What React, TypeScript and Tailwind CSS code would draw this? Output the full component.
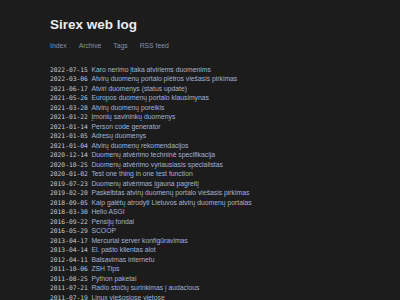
import React from "react";

const posts: [string, string][] = [
  ["2022-07-15", "Karo nerimo įtaka atviriems duomenims"],
  ["2022-03-06", "Atvirų duomenų portalo plėtros viešasis pirkimas"],
  ["2021-06-17", "Atviri duomenys (status update)"],
  ["2021-05-26", "Europos duomenų portalo klausimynas"],
  ["2021-03-28", "Atvirų duomenų poreikis"],
  ["2021-01-22", "Įmonių savininkų duomenys"],
  ["2021-01-14", "Person code generator"],
  ["2021-01-05", "Adresų duomenys"],
  ["2021-01-04", "Atvirų duomenų rekomendacijos"],
  ["2020-12-14", "Duomenų atvėrimo techninė specifikacija"],
  ["2020-10-25", "Duomenų atvėrimo vyriausiasis specialistas"],
  ["2020-01-02", "Test one thing in one test function"],
  ["2019-07-23", "Duomenų atvėrimas įgauna pagreitį"],
  ["2019-02-20", "Paskelbtas atvirų duomenų portalo viešasis pirkimas"],
  ["2018-09-05", "Kaip galėtų atrodyti Lietuvos atvirų duomenų portalas"],
  ["2018-03-30", "Hello ASGI"],
  ["2016-09-22", "Pensijų fondai"],
  ["2016-05-29", "SCOOP"],
  ["2013-04-17", "Mercurial server konfigūravimas"],
  ["2013-04-14", "El. pašto klientas alot"],
  ["2012-04-11", "Balsavimas internetu"],
  ["2011-10-06", "ZSH Tips"],
  ["2011-08-25", "Python paketai"],
  ["2011-07-21", "Radio stočių surinkimas į audacious"],
  ["2011-07-19", "Linux viešosiose vietose"],
];

export default function App() {
  return (
    <div className="min-h-[300px] bg-[#1c1c1c] pl-[50px] pt-[17px] font-['Liberation_Sans',Arial,sans-serif]">
      {/* Header */}
      <h1 className="text-[13.5px] leading-[16px] font-bold text-[#ececec]">
        Sirex web log
      </h1>
      <nav className="mt-[8px] flex gap-3 text-[6.8px] leading-[10px] text-[#8491ad]">
        <a href="#">Index</a>
        <a href="#">Archive</a>
        <a href="#">Tags</a>
        <a href="#">RSS feed</a>
      </nav>

      {/* Post list */}
      <ul className="mt-[13.5px]">
        {posts.map(([date, title]) => (
          <li
            key={date + title}
            className="flex h-[9.5px] items-baseline gap-[3.5px] whitespace-nowrap text-[6.8px] leading-[9.5px]"
          >
            <span className="font-['DejaVu_Sans_Mono',monospace] text-[6.3px] text-[#cccccc]">
              {date}
            </span>
            <a href="#" className="text-[#a3b2d4]">
              {title}
            </a>
          </li>
        ))}
      </ul>
    </div>
  );
}
